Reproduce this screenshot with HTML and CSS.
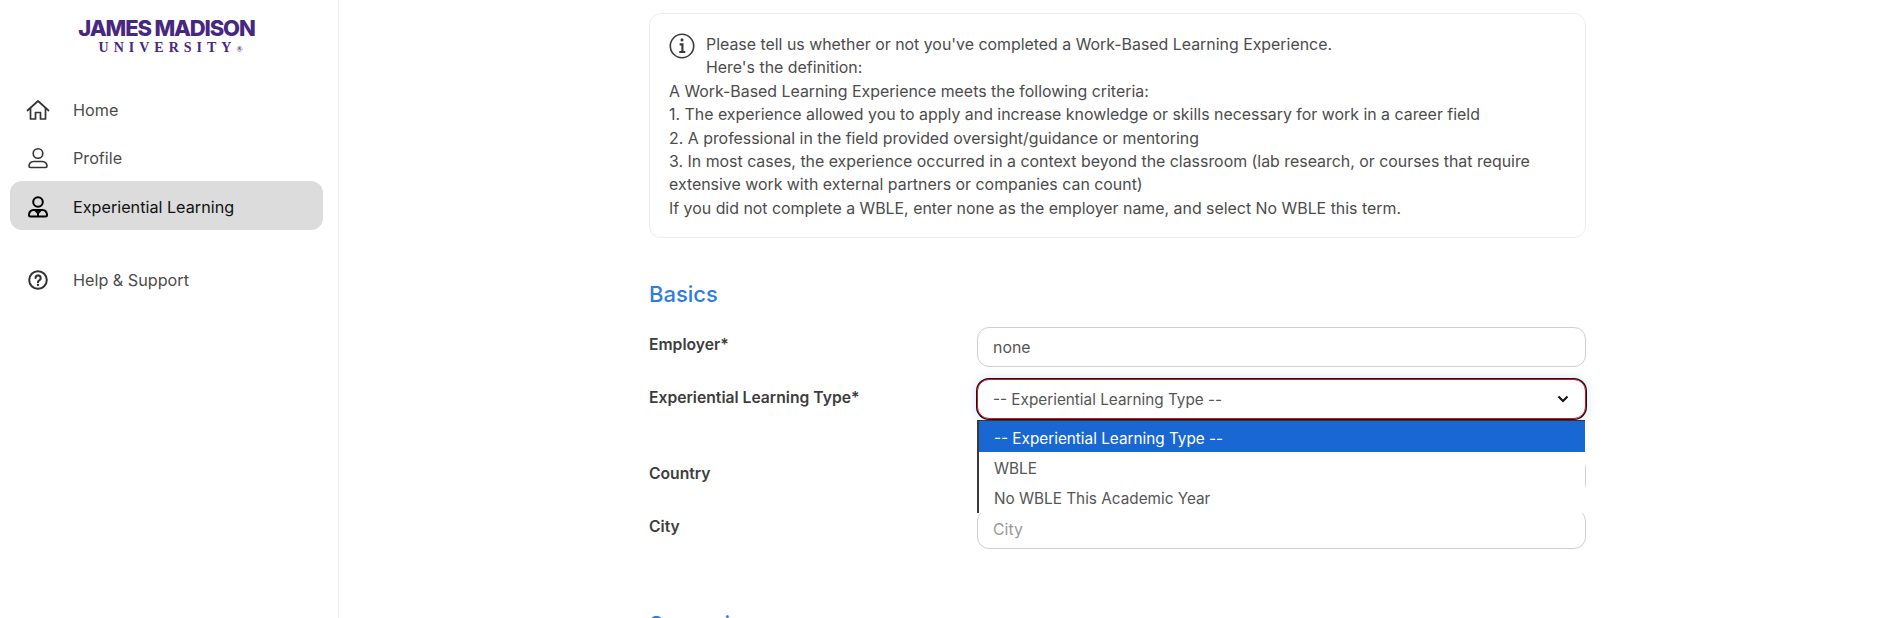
FILE: index.html
```html
<!DOCTYPE html>
<html lang="en">
<head>
<meta charset="utf-8">
<title>Experiential Learning</title>
<link rel="stylesheet" href="styles.css">
</head>
<body>
<div class="app">
  <aside class="sidebar">
    <div class="logo">
      <div class="logo-main">JAMES MADISON</div>
      <div class="logo-sub">UNIVERSITY<span class="logo-reg">®</span></div>
    </div>
    <nav class="nav">
      <a class="nav-item">
        <svg class="nav-icon" viewBox="0 0 24 24" fill="none" stroke="currentColor" stroke-width="1.7" stroke-linejoin="round" stroke-linecap="round"><path d="M1.500 12.500 12 3l10.500 9.500"/><path d="M4.500 10.500V21h5v-6.500h5V21h5V10.500"/></svg>
        <span>Home</span>
      </a>
      <a class="nav-item">
        <svg class="nav-icon" viewBox="0 0 24 24" fill="none" stroke="currentColor" stroke-width="1.6"><circle cx="12" cy="7.500" r="4.800"/><path d="M7.500 15.500h9a5 5 0 0 1 4.500 4v.5a1.500 1.500 0 0 1-1.500 1.500h-15A1.500 1.500 0 0 1 3 20v-.5a5 5 0 0 1 4.500-4z"/></svg>
        <span>Profile</span>
      </a>
      <a class="nav-item active">
        <svg class="nav-icon" viewBox="0 0 24 24" fill="none" stroke="currentColor" stroke-width="2"><circle cx="12" cy="7" r="4.800"/><path d="M7.500 15h9a5 5 0 0 1 4.500 4.500v.5a1.500 1.500 0 0 1-1.500 1.500h-15A1.500 1.500 0 0 1 3 20v-.5A5 5 0 0 1 7.500 15z"/><path d="M9 15l3 3 3-3M12 18v3.500"/></svg>
        <span>Experiential Learning</span>
      </a>
      <a class="nav-item help">
        <svg class="nav-icon" viewBox="0 0 24 24" fill="none" stroke="currentColor" stroke-width="2" stroke-linecap="round"><circle cx="12" cy="12" r="8.800"/><path d="M9.500 10a2.600 2.600 0 1 1 4 2.200c-1 .6-1.500 1.100-1.500 2.100" stroke-width="2.100"/><path d="M12 17v.1" stroke-width="2.300"/></svg>
        <span>Help &amp; Support</span>
      </a>
    </nav>
  </aside>
  <main class="main">
    <div class="column">
      <section class="notice">
        <div class="notice-head">
          <svg class="info-icon" viewBox="0 0 24 24" fill="none" stroke="#3c3c3c" stroke-width="1.500"><circle cx="12" cy="12" r="10.800"/><path d="M12 6.300v.1" stroke-width="2.800" stroke-linecap="round"/><path d="M9.800 10.500h2.600v7M9.500 17.500h5.500" stroke-width="2"/></svg>
          <div>Please tell us whether or not you've completed a Work-Based Learning Experience.<br>Here's the definition:</div>
        </div>
        <div>A Work-Based Learning Experience meets the following criteria:</div>
        <div>1. The experience allowed you to apply and increase knowledge or skills necessary for work in a career field</div>
        <div>2. A professional in the field provided oversight/guidance or mentoring</div>
        <div>3. In most cases, the experience occurred in a context beyond the classroom (lab research, or courses that require extensive work with external partners or companies can count)</div>
        <div>If you did not complete a WBLE, enter none as the employer name, and select No WBLE this term.</div>
      </section>
      <h2 class="section-title">Basics</h2>
      <div class="row">
        <label class="label">Employer*</label>
        <div class="field">none</div>
      </div>
      <div class="row row-select">
        <label class="label">Experiential Learning Type*</label>
        <div class="field field-select">
          <span>-- Experiential Learning Type --</span>
          <svg class="chevron" viewBox="0 0 12 8" fill="none" stroke="#111" stroke-width="2"><path d="M1.500 1.500 6 6l4.500-4.500"/></svg>
          <ul class="popup">
            <li class="opt selected">-- Experiential Learning Type --</li>
            <li class="opt">WBLE</li>
            <li class="opt">No WBLE This Academic Year</li>
          </ul>
        </div>
      </div>
      <div class="row">
        <label class="label">Country</label>
        <div class="field"></div>
      </div>
      <div class="row">
        <label class="label">City</label>
        <div class="field placeholder">City</div>
      </div>
      <h2 class="section-title next">Supervisor</h2>
    </div>
  </main>
</div>
</body>
</html>
```
FILE: styles.css
```css
* { box-sizing: border-box; }
html, body { margin: 0; height: 100%; overflow: hidden; background: #fff; }
body { font-family: "Inter", "Liberation Sans", sans-serif; font-size: 15.900px; color: #4c4c4c; }
.app { display: flex; height: 618px; }
.sidebar { width: 339px; flex: none; border-right: 1px solid #ececec; padding: 0 15px 0 10px; }
.logo { height: 85px; padding-top: 17px; text-align: center; width: 313px; }
.logo-main { font-family: "Inter", "Liberation Sans", sans-serif; font-weight: 800; font-size: 22px; line-height: 22px; letter-spacing: -1.150px; color: #47287f; }
.logo-sub { font-family: "Liberation Serif", serif; font-weight: 700; font-size: 14px; line-height: 14px; margin-top: 2px; letter-spacing: 5px; color: #47287f; padding-left: 8px; }
.logo-reg { font-size: 8px; letter-spacing: 0; }
.nav { display: flex; flex-direction: column; }
.nav-item { display: flex; align-items: center; height: 48px; padding: 2px 0 0 16px; gap: 23px; border-radius: 12px; font-size: 16.200px; color: #4c4c4c; line-height: 20px; }
.nav-item.active { height: 49px; color: #111; background: #dcdcdc; }
.nav-item.help { margin-top: 25px; }
.nav-icon { width: 24px; height: 24px; flex: none; color: #333; }
.active .nav-icon { color: #000; }
.main { flex: 1; min-width: 0; padding-left: 310px; }
.column { width: 937px; padding-top: 13px; }
.notice { border: 1px solid #eee; border-radius: 12px; padding: 19px 19px 0; height: 225px; line-height: 23.400px; }
.notice-head { display: flex; gap: 11px; }
.info-icon { width: 26px; height: 26px; flex: none; }
.section-title { margin: 42px 0 19px; font-size: 22px; line-height: 28px; font-weight: 500; color: #2f7de1; }
.section-title.next { margin-top: 61px; }
.row { display: flex; margin-bottom: 13px; }
.row-select { margin-bottom: 37px; }
.label { width: 328px; flex: none; padding-top: 7px; font-weight: 600; font-size: 15.700px; line-height: 22px; color: #3d3d3d; }
.field { position: relative; flex: 1; height: 40px; padding: 0 15px; display: flex; align-items: center; justify-content: space-between; border: 1px solid #cfcfcf; border-radius: 12px; background: #fff; color: #555; }
.field-select { margin-top: -1px; font-size: 15.300px; border: 1px solid #e01020; box-shadow: 0 0 0 1px #111, 0 0 8px 3px rgba(70, 140, 230, 0.16); }
.placeholder { color: #9a9a9a; }
.chevron { width: 12px; height: 8px; margin-right: 1px; }
.popup { position: absolute; z-index: 2; left: -1px; right: 0; top: 40px; height: 93px; margin: 0; padding: 0; list-style: none; background: #fff; border-left: 2px solid #3a3a3a; border-top: 1px solid #333; }
.opt { height: 30px; padding: 3px 0 0 15px; display: flex; align-items: center; color: #555; }
.opt.selected { height: 31px; background: #1967d2; color: #fff; }
```
